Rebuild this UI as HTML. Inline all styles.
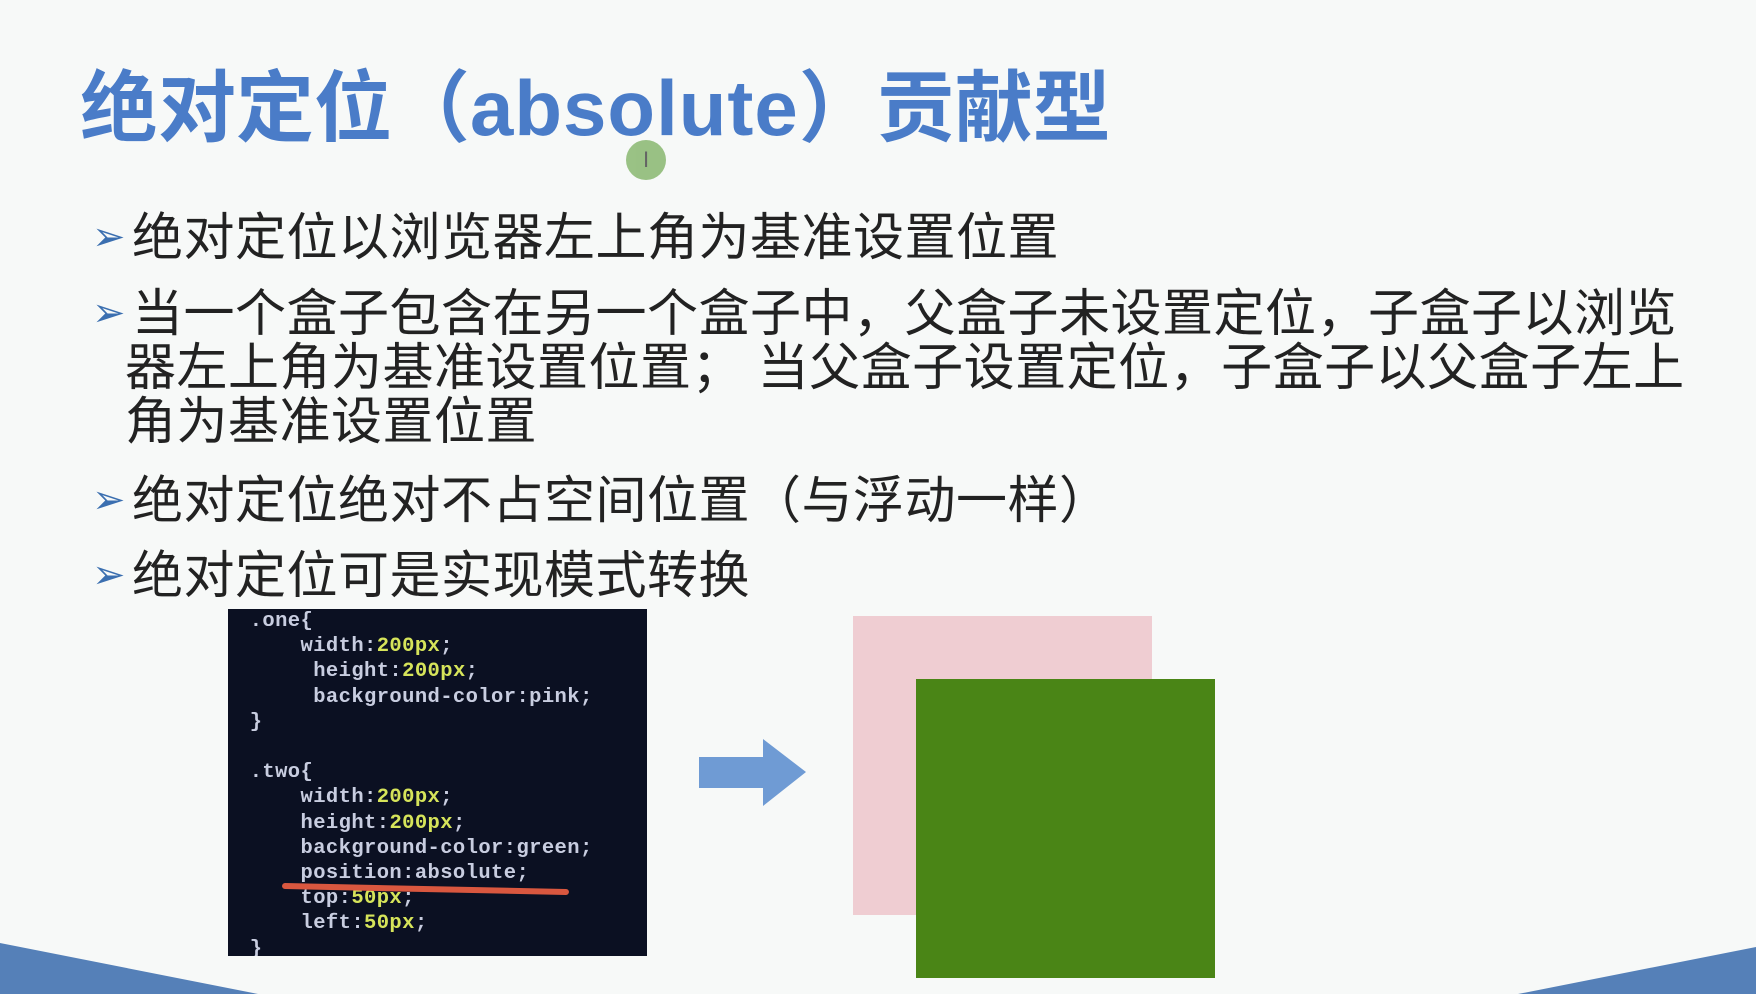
<!DOCTYPE html>
<html><head><meta charset="utf-8"><style>
body{margin:0;width:1756px;height:994px;background:#f7f9f8;position:relative;overflow:hidden;font-family:"Liberation Sans","Noto Sans CJK SC",sans-serif}
.t{position:absolute;left:80px;top:62px;font-size:78px;font-weight:bold;color:#4a7cc8;white-space:nowrap;line-height:92px}
.t span{letter-spacing:1px}
.b{position:absolute;left:132px;font-size:51px;color:#222;white-space:nowrap;line-height:55px;letter-spacing:0.5px}
.b i{position:absolute;left:-40px;font-style:normal;color:#3b6fb0;font-size:40px}
.code{position:absolute;left:228px;top:609px;width:410px;height:347px;padding-left:9px;background:#0b1022;font-family:"Liberation Mono","DejaVu Sans Mono",monospace;font-size:20.5px;line-height:25.2px;color:#c8cde0;white-space:pre;overflow:hidden;font-weight:bold;letter-spacing:0.4px}
.code .y{color:#d6e45a;font-weight:bold}
</style></head><body>
<div class="t">绝对定位（<span>absolute</span>）贡献型</div>
<div style="position:absolute;left:626px;top:140px;width:40px;height:40px;border-radius:50%;background:#8fbb78;opacity:.9;color:#555;font-size:22px;text-align:center;line-height:40px">I</div>
<div class="b" style="top:210px"><i>➢</i>绝对定位以浏览器左上角为基准设置位置</div>
<div class="b" style="top:286px"><i>➢</i>当一个盒子包含在另一个盒子中，父盒子未设置定位，子盒子以浏览</div>
<div class="b" style="top:340px;left:125px">器左上角为基准设置位置； 当父盒子设置定位，子盒子以父盒子左上</div>
<div class="b" style="top:394px;left:125px">角为基准设置位置</div>
<div class="b" style="top:473px"><i>➢</i>绝对定位绝对不占空间位置（与浮动一样）</div>
<div class="b" style="top:548px"><i>➢</i>绝对定位可是实现模式转换</div>
<div class="code"> .one{
     width:<span class="y">200px</span>;
      height:<span class="y">200px</span>;
      background-color:pink;
 }

 .two{
     width:<span class="y">200px</span>;
     height:<span class="y">200px</span>;
     background-color:green;
     position:absolute;
     top:<span class="y">50px</span>;
     left:<span class="y">50px</span>;
 }</div>
<div style="position:absolute;left:282px;top:886px;width:287px;height:6px;background:#d9573f;border-radius:3px;transform:rotate(1.2deg)"></div>
<svg style="position:absolute;left:0;top:0" width="1756" height="994">
<polygon points="699,757 763,757 763,739 806,772 763,806 763,788 699,788" fill="#6f9bd4"/>
<polygon points="0,943 0,994 258,994" fill="#5580b8"/>
<polygon points="1756,947 1756,994 1518,994" fill="#5580b8"/>
</svg>
<div style="position:absolute;left:853px;top:616px;width:299px;height:299px;background:#efcdd2"></div>
<div style="position:absolute;left:916px;top:679px;width:299px;height:299px;background:#4a8516"></div>
</body></html>
